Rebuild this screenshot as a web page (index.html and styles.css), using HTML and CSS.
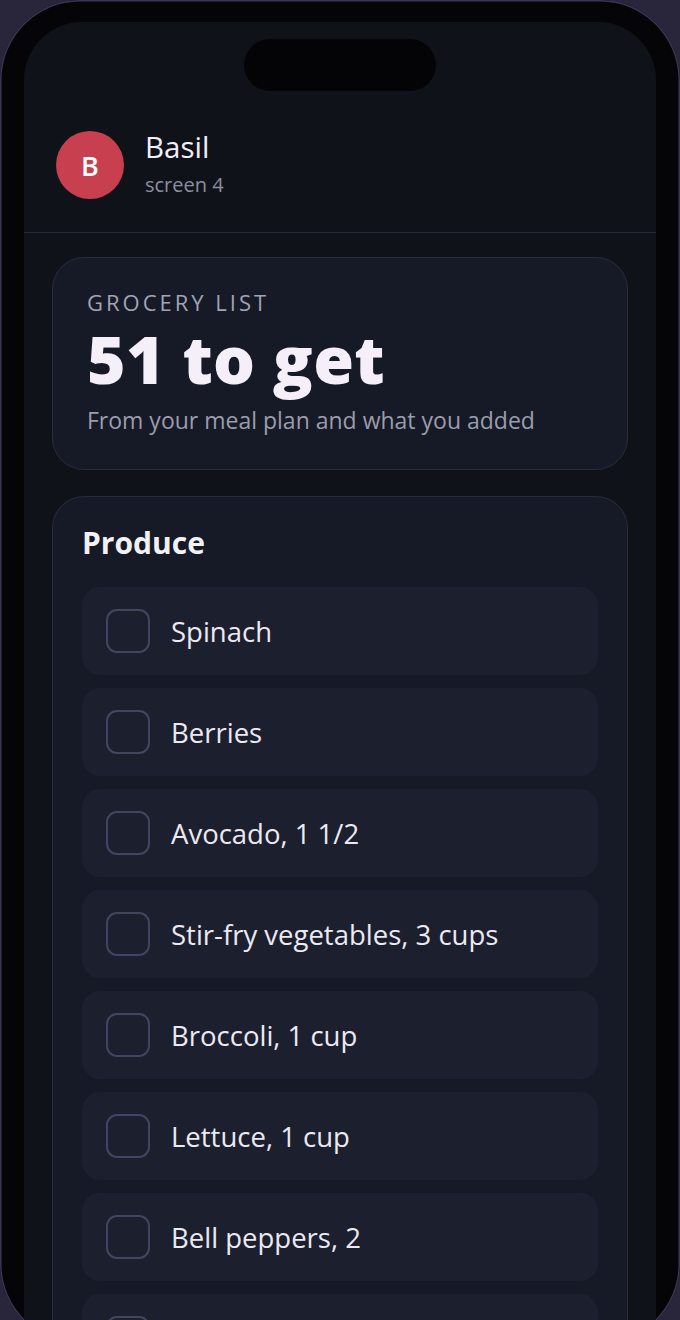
FILE: index.html
```html
<!DOCTYPE html>
<html lang="en">
<head>
<meta charset="utf-8">
<title>Basil – Grocery list</title>
<link rel="stylesheet" href="styles.css">
</head>
<body>
<div class="frame">
  <div class="screen">
    <div class="island"></div>
    <header class="header">
      <div class="avatar">B</div>
      <div class="who">
        <div class="name">Basil</div>
        <div class="sub">screen 4</div>
      </div>
    </header>
    <main class="content">
      <section class="card summary">
        <div class="eyebrow">GROCERY LIST</div>
        <div class="big">51 to get</div>
        <div class="desc">From your meal plan and what you added</div>
      </section>
      <section class="card group">
        <h2 class="group-title">Produce</h2>
        <ul class="items">
          <li class="item"><span class="check"></span><span class="label">Spinach</span></li>
          <li class="item"><span class="check"></span><span class="label">Berries</span></li>
          <li class="item"><span class="check"></span><span class="label">Avocado, 1 1/2</span></li>
          <li class="item"><span class="check"></span><span class="label">Stir-fry vegetables, 3 cups</span></li>
          <li class="item"><span class="check"></span><span class="label">Broccoli, 1 cup</span></li>
          <li class="item"><span class="check"></span><span class="label">Lettuce, 1 cup</span></li>
          <li class="item"><span class="check"></span><span class="label">Bell peppers, 2</span></li>
          <li class="item"><span class="check"></span><span class="label">Tomatoes, 2</span></li>
        </ul>
      </section>
    </main>
  </div>
</div>
</body>
</html>
```

FILE: styles.css
```css
* { box-sizing: border-box; }
html, body {
  margin: 0;
  padding: 0;
  height: 1320px;
  overflow: hidden;
}
body {
  background: #29253b;
  font-family: "Open Sans", "Noto Sans", sans-serif;
  color: #ecebf3;
}
.frame {
  width: 680px;
  height: 1344px;
  border-radius: 80px;
  background: #050508;
  padding: 22px 24px 0;
  box-shadow: inset 0 0 0 1.5px #3a3652;
}
.screen {
  position: relative;
  height: 100%;
  background: #10121a;
  border-radius: 58px 58px 0 0;
  overflow: hidden;
}
.island {
  position: absolute;
  left: 220px;
  top: 17px;
  width: 192px;
  height: 52px;
  border-radius: 26px;
  background: #040406;
}
.header {
  display: flex;
  align-items: center;
  gap: 21px;
  padding: 109px 32px 33px;
  border-bottom: 1px solid #262936;
}
.avatar {
  width: 68px;
  height: 68px;
  border-radius: 50%;
  background: #c8404f;
  color: #fff;
  display: flex;
  align-items: center;
  justify-content: center;
  font-size: 27px;
  font-weight: 600;
}
.who { display: flex; flex-direction: column; gap: 8px; margin-top: -2px; }
.name { font-size: 29.5px; font-weight: 500; color: #f1eff7; line-height: 34px; }
.sub { font-size: 20px; color: #8b8e9e; line-height: 26px; }
.content {
  display: flex;
  flex-direction: column;
  gap: 26px;
  padding: 24px 28px;
}
.card {
  background: #161926;
  border: 1px solid #282c3c;
  border-radius: 32px;
}
.summary {
  padding: 33px 34px 30px;
  height: 213px;
}
.eyebrow {
  font-size: 22px;
  letter-spacing: 3px;
  color: #a1a4b4;
  line-height: 22px;
}
.big {
  font-size: 66px;
  font-weight: 800;
  color: #f5eff9;
  line-height: 90px;
  letter-spacing: 0.3px;
}
.desc {
  font-size: 23px;
  color: #9a9dac;
  line-height: 30px;
  margin-top: 2px;
}
.group {
  padding: 24px 29px 30px;
}
.group-title {
  margin: 0 0 22px;
  font-size: 30px;
  font-weight: 700;
  color: #f3f1f8;
  line-height: 44px;
}
.items {
  list-style: none;
  margin: 0;
  padding: 0;
  display: flex;
  flex-direction: column;
  gap: 13px;
}
.item {
  height: 88px;
  background: #1c1f2d;
  border-radius: 18px;
  display: flex;
  align-items: center;
  gap: 21px;
  padding: 0 24px;
}
.check {
  width: 44px;
  height: 44px;
  border: 2.5px solid #404560;
  border-radius: 11px;
  flex: none;
}
.label {
  font-size: 27.5px;
  color: #ebe9f2;
}
```
